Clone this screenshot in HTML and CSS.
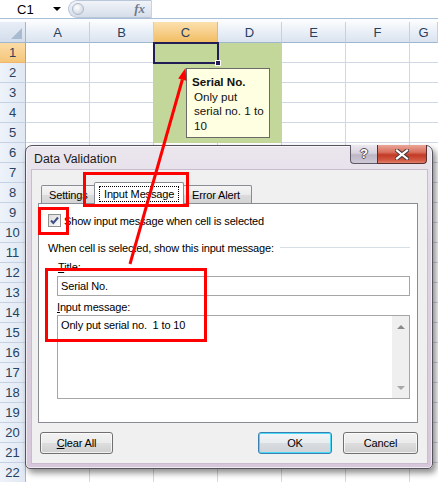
FILE: index.html
```html
<!DOCTYPE html>
<html>
<head>
<meta charset="utf-8">
<title>Data Validation</title>
<link rel="stylesheet" href="styles.css">
</head>
<body>
<div class="app">
  <div class="fbar">
    <div class="namebox"><span>C1</span><span class="nb-arrow"></span></div>
    <div class="fx-pill"><span class="knob"></span><span class="fx">fx</span></div>
    <div class="fx-input"></div>
  </div>
  <div class="fbar-gap"></div>

  <div class="sheet">
    <div class="colhead">
      <div class="corner"><svg width="25" height="20" viewBox="0 0 25 20"><polygon points="22,6 22,17 11,17" fill="#a9bbd1"/></svg></div>
      <div class="ch">A</div>
      <div class="ch">B</div>
      <div class="ch sel">C</div>
      <div class="ch">D</div>
      <div class="ch">E</div>
      <div class="ch">F</div>
      <div class="ch last">G</div>
    </div>
    <div class="sheet-body">
      <div class="rowheads">
        <div class="rh sel">1</div><div class="rh">2</div><div class="rh">3</div><div class="rh">4</div>
        <div class="rh">5</div><div class="rh">6</div><div class="rh">7</div><div class="rh">8</div>
        <div class="rh">9</div><div class="rh">10</div><div class="rh">11</div><div class="rh">12</div>
        <div class="rh">13</div><div class="rh">14</div><div class="rh">15</div><div class="rh">16</div>
        <div class="rh">17</div><div class="rh">18</div><div class="rh">19</div><div class="rh">20</div>
        <div class="rh">21</div><div class="rh">22</div>
      </div>
      <div class="cells">
        <div class="fill"></div>
        <div class="selcell"><span class="handle"></span></div>
      </div>
    </div>
  </div>

  <div class="tooltip">
    <div class="tt-title">Serial No.</div>
    <div class="tt-body">Only put<br>serial no. 1 to<br>10</div>
  </div>

  <div class="dialog">
    <div class="titlebar">
      <div class="title">Data Validation</div>
      <div class="tb-btns">
        <div class="help">?</div>
        <div class="close">
          <svg width="14" height="11" viewBox="0 0 14 11">
            <path d="M2 1.5 L12 9.5 M12 1.5 L2 9.5" stroke="#4a3a3a" stroke-width="4.2" stroke-linecap="square"/>
            <path d="M2 1.5 L12 9.5 M12 1.5 L2 9.5" stroke="#ffffff" stroke-width="2.2" stroke-linecap="square"/>
          </svg>
        </div>
      </div>
    </div>
    <div class="content">
      <div class="tabs">
        <div class="tab t1">Settings</div>
        <div class="tab t2 active"><span class="focus">Input Message</span></div>
        <div class="tab t3">Error Alert</div>
      </div>
      <div class="panel">
        <div class="chk-row">
          <span class="checkbox"><svg width="11" height="11" viewBox="0 0 11 11"><path d="M2 5.5 L4.3 8 L9 2.5" fill="none" stroke="#3e4f86" stroke-width="2"/></svg></span>
          <span class="chk-label">Show input message when cell is selected</span>
        </div>
        <div class="section">
          <span>When cell is selected, show this input message:</span>
          <span class="groove"></span>
        </div>
        <div class="flabel"><u>T</u>itle:</div>
        <div class="input">Serial No.</div>
        <div class="flabel flabel2"><u>I</u>nput message:</div>
        <div class="textarea">
          <div class="ta-text">Only put serial no.&nbsp; 1 to 10</div>
          <div class="scroll">
            <span class="arr up"></span>
            <span class="arr down"></span>
          </div>
        </div>
      </div>
      <div class="buttons">
        <div class="btn clear"><u>C</u>lear All</div>
        <div class="btn ok">OK</div>
        <div class="btn cancel">Cancel</div>
      </div>
    </div>
  </div>

  <div class="mark mark-tab"></div>
  <div class="mark mark-chk"></div>
  <div class="mark mark-big"></div>

  <svg class="arrow" width="438" height="482" viewBox="0 0 438 482">
    <line x1="130" y1="264" x2="182.4" y2="79.5" stroke="#ff0000" stroke-width="3"/>
    <polygon points="185.5,68 186.4,80.8 178.2,78.5" fill="#ff0000"/>
  </svg>
</div>
</body>
</html>
```
FILE: styles.css
```css
* { box-sizing: border-box; }
html, body { margin: 0; padding: 0; }
body {
  width: 438px;
  height: 482px;
  overflow: hidden;
  background: #ffffff;
  font-family: "Liberation Sans", Arial, sans-serif;
}
.app {
  position: relative;
  width: 438px;
  height: 482px;
  overflow: hidden;
}

/* formula bar */
.fbar {
  display: flex;
  height: 19px;
  border-bottom: 1px solid #a9bfd9;
  background: #ffffff;
}
.namebox {
  width: 68px;
  display: flex;
  align-items: center;
  justify-content: space-between;
  padding: 0 7px 0 17px;
  font-size: 13px;
  color: #000;
}
.nb-arrow {
  width: 0;
  height: 0;
  border-left: 4px solid transparent;
  border-right: 4px solid transparent;
  border-top: 4px solid #000;
}
.fx-pill {
  width: 84px;
  height: 18px;
  border-radius: 9px 0 0 9px;
  background: linear-gradient(#f1f4f9, #d6deea);
  border: 1px solid #b9c6d8;
  border-right-color: #c8d3e2;
  display: flex;
  align-items: center;
  justify-content: space-between;
  padding: 0 6px 0 3px;
}
.knob {
  width: 12px;
  height: 12px;
  border-radius: 50%;
  background: radial-gradient(circle at 40% 35%, #ffffff, #c3cddb);
  border: 1px solid #aeb9ca;
}
.fx {
  font-family: "Liberation Serif", serif;
  font-style: italic;
  font-weight: bold;
  font-size: 13px;
  color: #6f7b8e;
}
.fx-input { flex: 1; }
.fbar-gap { height: 3px; background: #fbfcfe; }

/* sheet */
.colhead { display: flex; height: 21px; }
.corner {
  width: 26px;
  flex: none;
  border-right: 1px solid #9eb6ce;
  border-bottom: 1px solid #9eb6ce;
  background: linear-gradient(#e8eef7, #d3ddeb);
}
.corner svg { display: block; }
.ch {
  width: 64px;
  flex: none;
  border-right: 1px solid #c3d1e2;
  border-bottom: 1px solid #9eb6ce;
  background: linear-gradient(#f9fbfd, #e9eff7 50%, #dae3ef);
  display: flex;
  align-items: center;
  justify-content: center;
  font-size: 13px;
  color: #27415f;
}
.ch.sel {
  background: linear-gradient(#fbe0ad, #f7cf8a 50%, #f1bd63);
  border-right-color: #f2b36a;
  border-bottom-color: #f29536;
}
.ch.last { flex: 1; }

.sheet-body { display: flex; }
.rowheads { width: 26px; flex: none; }
.rh {
  height: 20px;
  border-right: 1px solid #9eb6ce;
  border-bottom: 1px solid #c3d1e2;
  background: linear-gradient(to right, #eef3fa, #e0e8f3);
  font-size: 13px;
  color: #27415f;
  display: flex;
  align-items: center;
  justify-content: center;
}
.rh.sel {
  background: linear-gradient(#fbdca6, #f5c67a);
  border-right-color: #f29536;
  border-bottom-color: #f2b36a;
}
.cells {
  flex: 1;
  display: grid;
  grid-template-columns: repeat(7, 64px);
  grid-template-rows: repeat(22, 20px);
  background-color: #ffffff;
  background-image:
    linear-gradient(to left, #d0d7e5 1px, transparent 1px),
    linear-gradient(to top, #d0d7e5 1px, transparent 1px);
  background-size: 64px 20px;
}
.fill {
  grid-column: 3 / 5;
  grid-row: 1 / 6;
  margin-left: -1px;
  background: #c4d79b;
}
.selcell {
  grid-column: 3;
  grid-row: 1;
  margin: -1px -1px -1px -1px;
  border: 2px solid #231d55;
  position: relative;
}
.handle {
  position: absolute;
  right: -4px;
  bottom: -4px;
  width: 6px;
  height: 6px;
  background: #231d55;
  border: 1px solid #ffffff;
}

/* tooltip */
.tooltip {
  position: absolute;
  left: 186px;
  top: 68px;
  width: 84px;
  height: 70px;
  background: #ffffe1;
  border: 1px solid #6a6a6a;
  padding: 6px 0 0 5px;
  font-size: 11.6px;
  line-height: 14.5px;
  color: #111;
}
.tt-title { font-weight: bold; }
.tt-body { padding-left: 2px; }

/* dialog */
.dialog {
  position: absolute;
  left: 25px;
  top: 145px;
  width: 408px;
  height: 324px;
  border: 1px solid #56525e;
  border-radius: 7px 7px 5px 5px;
  background: linear-gradient(#ebe6ee, #ddd4e2 30%, #d6c8da 100%);
  box-shadow: 3px 4px 6px rgba(0, 0, 0, 0.45), inset 0 0 0 1px rgba(255,255,255,0.6);
  display: flex;
  flex-direction: column;
  padding: 0 5px 5px 6px;
  z-index: 2;
}
.titlebar {
  height: 24px;
  display: flex;
  align-items: flex-start;
  flex: none;
}
.title {
  padding: 6px 0 0 2px;
  font-size: 12.3px;
  line-height: 14px;
  color: #1a1a1a;
}
.tb-btns {
  margin-left: auto;
  display: flex;
  margin-top: -1px;
}
.help {
  width: 27px;
  height: 19px;
  border: 1px solid #5d5966;
  border-top: none;
  border-right: none;
  border-radius: 0 0 0 4px;
  background: linear-gradient(#ece8ef, #d8d2dd 45%, #bdb6c5 55%, #cfc9d6);
  color: #ffffff;
  font-weight: bold;
  font-size: 13px;
  line-height: 18px;
  text-align: center;
  text-shadow: 1px 0 0 #55505c, -1px 0 0 #55505c, 0 1px 0 #55505c, 0 -1px 0 #55505c;
}
.close {
  width: 50px;
  height: 19px;
  border: 1px solid #5a2e2e;
  border-top: none;
  border-radius: 0 0 4px 0;
  background: linear-gradient(#eaa698, #d9705e 40%, #c23a24 55%, #d35a44 85%, #e2806a);
  display: flex;
  align-items: center;
  justify-content: center;
}
.close svg { display: block; }

.content {
  flex: 1;
  background: #f0f0f0;
  display: flex;
  flex-direction: column;
  font-size: 11px;
  letter-spacing: -0.15px;
  color: #000;
  box-shadow: 0 0 0 1px #c9bccd;
}

.tabs {
  margin-top: 12px;
  height: 21px;
  display: flex;
  align-items: flex-end;
  padding-left: 9px;
  flex: none;
}
.tab {
  height: 18px;
  border: 1px solid #898c95;
  border-bottom: none;
  border-radius: 2px 2px 0 0;
  background: linear-gradient(#f5f5f5, #ebebeb 50%, #dcdcdc 51%, #d4d4d4);
  display: flex;
  align-items: center;
  padding-left: 7px;
}
.t1 { width: 55px; }
.t2 {
  width: 90px;
  margin-left: -2px;
  height: 22px;
  margin-bottom: -1px;
  background: #ffffff;
  position: relative;
  z-index: 2;
  align-items: flex-start;
  padding: 3px 0 0 4px;
}
.t3 { width: 69px; margin-left: -1px; padding-left: 8px; }
.focus {
  border: 1px dotted #000;
  height: 16px;
  line-height: 14px;
  padding: 0 4px;
}

.panel {
  margin-left: 6px;
  width: 380px;
  height: 220px;
  background: #ffffff;
  border: 1px solid #898c95;
  padding: 10px 7px 0 9px;
  display: flex;
  flex-direction: column;
  flex: none;
}
.chk-row {
  height: 13px;
  display: flex;
  align-items: center;
  gap: 3px;
}
.checkbox {
  width: 13px;
  height: 13px;
  border: 1px solid #8e8f8f;
  background: linear-gradient(135deg, #dcdcdc, #fbfbfb);
  display: flex;
  align-items: center;
  justify-content: center;
}
.checkbox svg { display: block; }
.section {
  margin-top: 14px;
  height: 14px;
  display: flex;
  align-items: center;
}
.groove {
  flex: 1;
  margin-left: 6px;
  border-top: 1px solid #d5dfe5;
  border-bottom: 1px solid #ffffff;
}
.flabel {
  margin-top: 5px;
  height: 14px;
  line-height: 14px;
  padding-left: 10px;
}
.flabel2 { margin-top: 4px; padding-left: 9px; }
.input {
  margin-top: 2px;
  margin-left: 9px;
  height: 20px;
  border: 1px solid #a6a6a6;
  line-height: 18px;
  padding-left: 3px;
}
.textarea {
  margin-top: 1px;
  margin-left: 9px;
  height: 84px;
  border: 1px solid #a6a6a6;
  display: flex;
}
.ta-text {
  flex: 1;
  padding: 2px 0 0 3px;
  line-height: 14px;
}
.scroll {
  width: 17px;
  background: #efefef;
  display: flex;
  flex-direction: column;
  justify-content: space-between;
  align-items: center;
  padding: 9px 0 8px;
}
.arr {
  width: 0;
  height: 0;
  border-left: 4px solid transparent;
  border-right: 4px solid transparent;
}
.arr.up { border-bottom: 4px solid #8a8a8a; }
.arr.down { border-top: 4px solid #a8a8a8; }

.buttons {
  margin-top: 9px;
  height: 22px;
  display: flex;
  padding: 0 9px 0 8px;
  flex: none;
}
.btn {
  height: 22px;
  border: 1px solid #707070;
  border-radius: 3px;
  background: linear-gradient(#f2f2f2, #ebebeb 50%, #dddddd 51%, #cfcfcf);
  display: flex;
  align-items: center;
  justify-content: center;
  box-shadow: inset 0 0 0 1px rgba(255,255,255,0.7);
}
.clear { width: 73px; }
.ok {
  width: 74px;
  margin-left: auto;
  border-color: #3c7fb1;
  background: linear-gradient(#f3f5f7, #e8ecef 50%, #d9dde1 51%, #cfd3d7);
  box-shadow: inset 0 0 0 1px #48dbf9;
}
.cancel { width: 75px; margin-left: 11px; }

/* annotations */
.mark {
  position: absolute;
  border: 3px solid #ff0000;
  z-index: 3;
}
.mark-tab { left: 83px; top: 172px; width: 106px; height: 35px; }
.mark-chk { left: 38px; top: 207px; width: 31px; height: 28px; }
.mark-big { left: 45px; top: 268px; width: 162px; height: 74px; }

.arrow {
  position: absolute;
  left: 0;
  top: 0;
  z-index: 4;
  pointer-events: none;
}
```
